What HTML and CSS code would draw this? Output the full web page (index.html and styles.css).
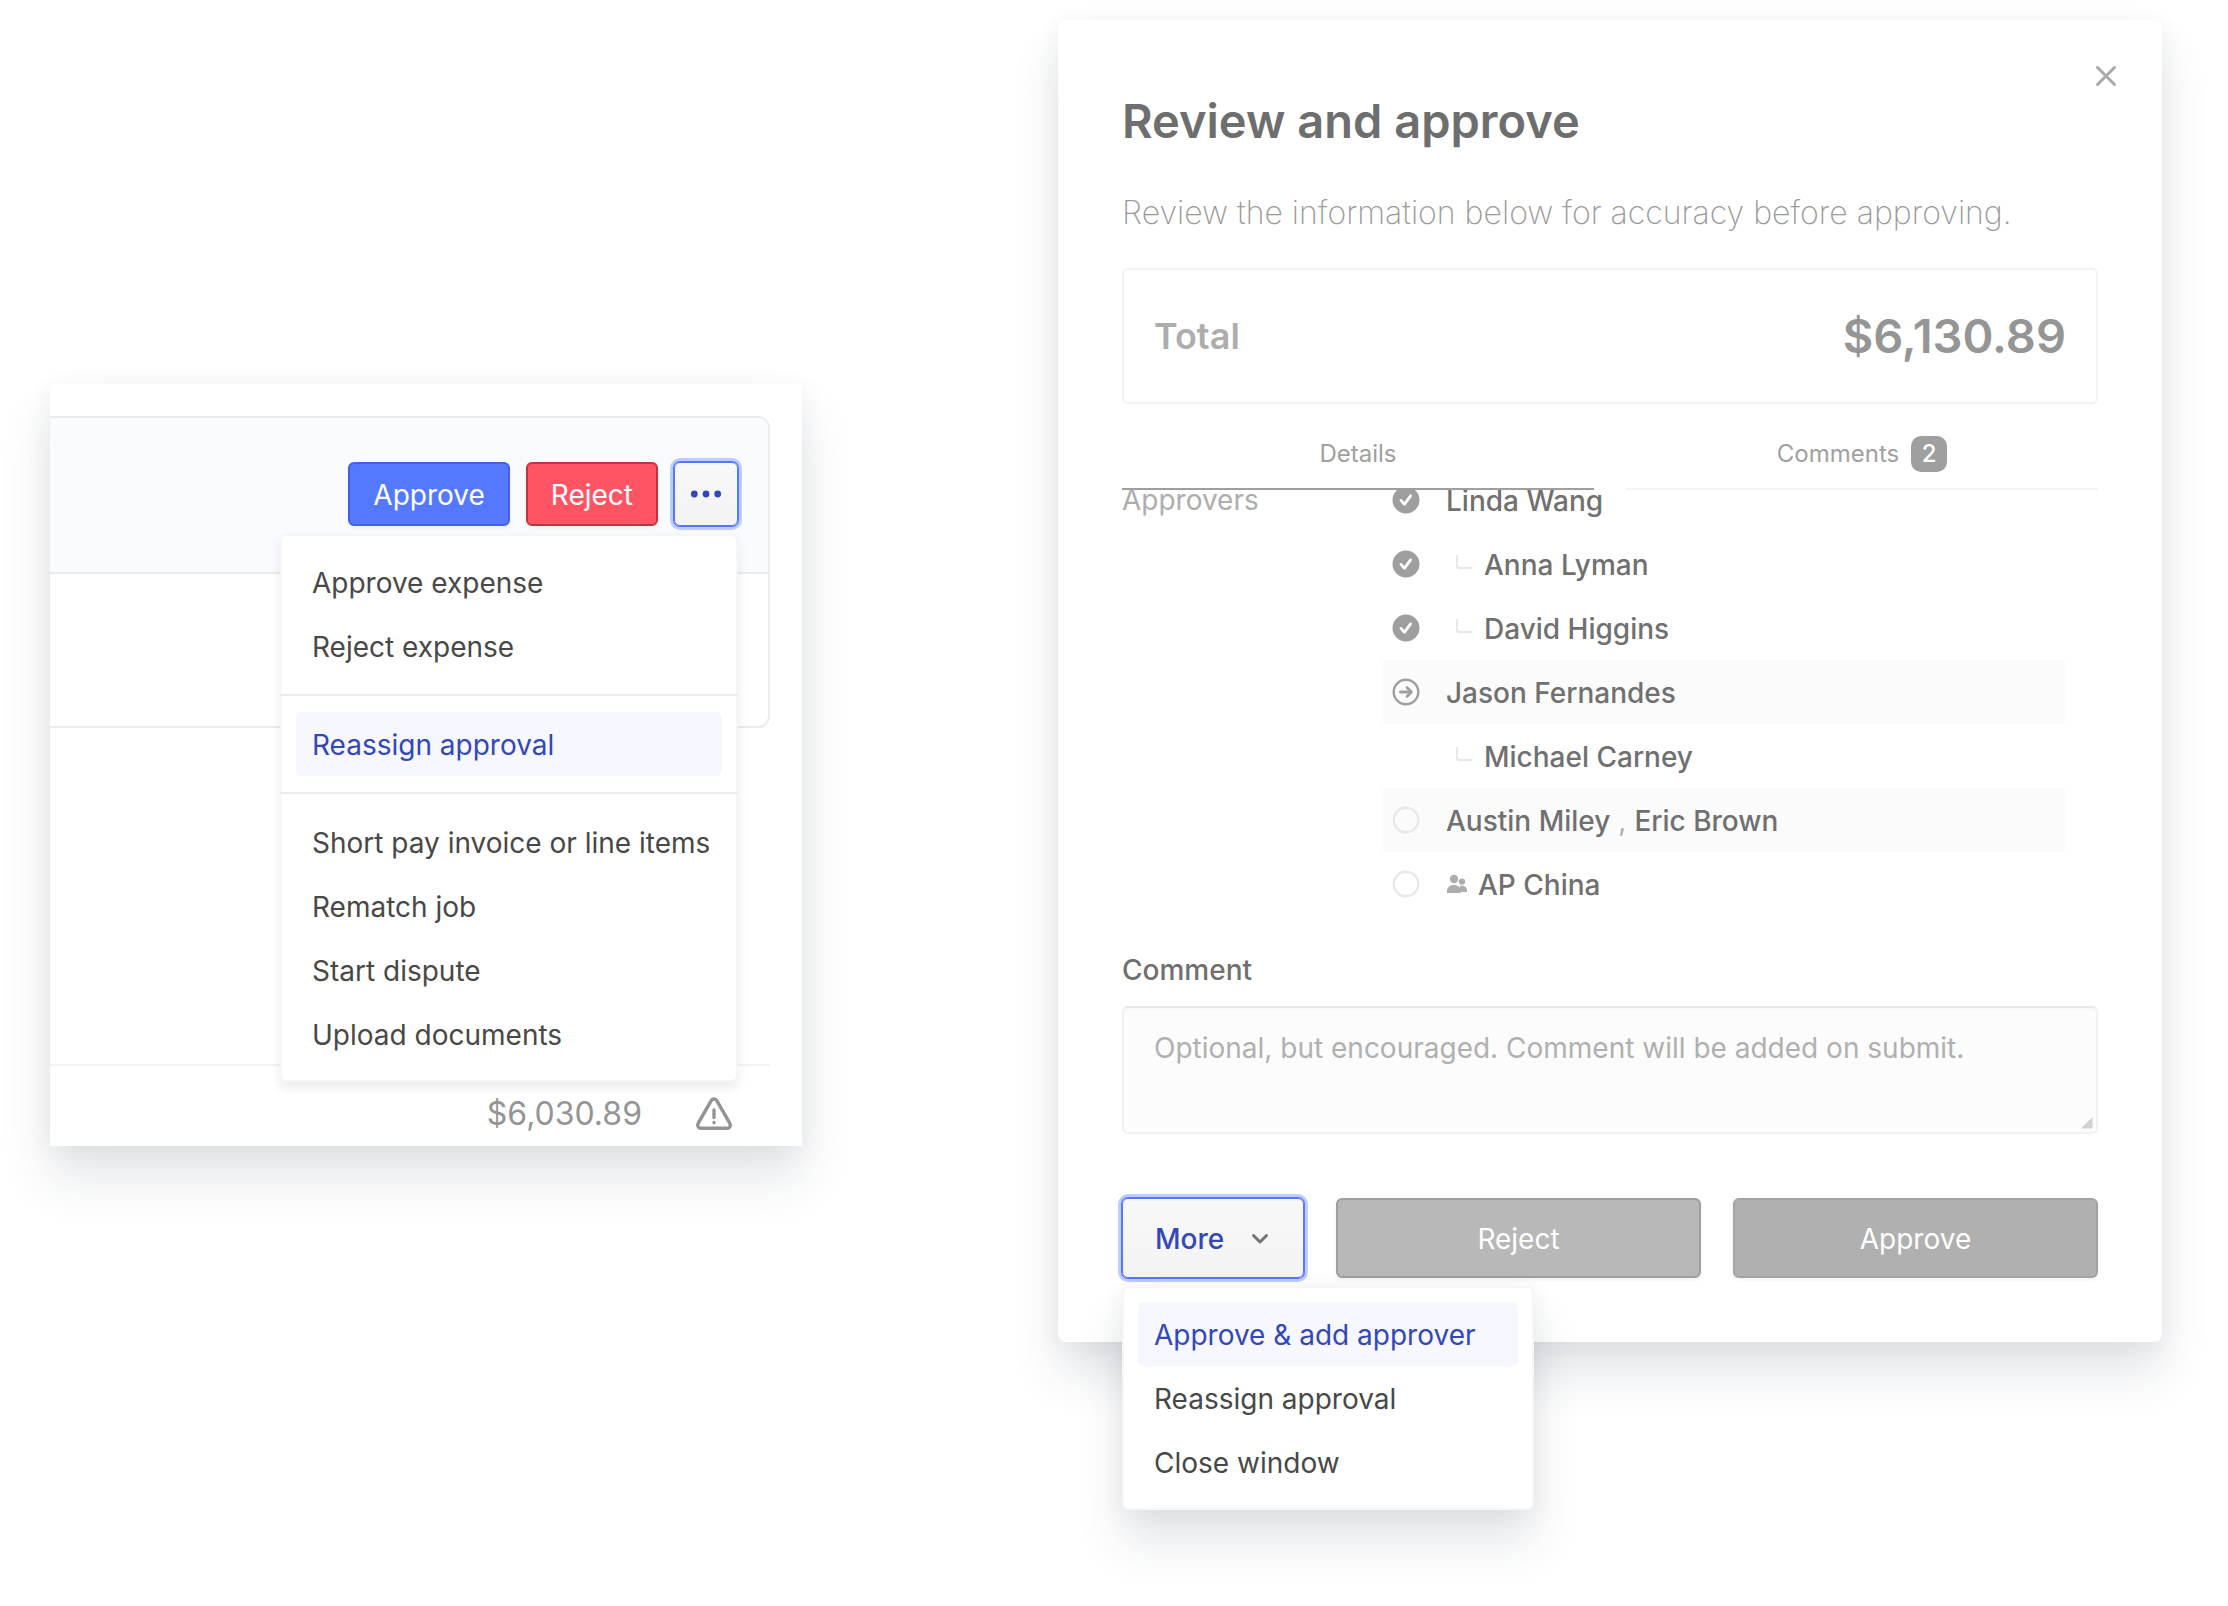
FILE: index.html
```html
<!DOCTYPE html>
<html lang="en">
<head>
  <meta charset="UTF-8">
  <meta name="viewport" content="width=device-width, initial-scale=1.0">
  <title>Review and approve</title>
  <link rel="stylesheet" href="styles.css">
</head>
<body>

<main class="page">

  <section class="invoice">
    <div class="panel">
      <div class="panel-actions">
        <button class="btn btn-approve">Approve</button>
        <button class="btn btn-reject">Reject</button>
        <div class="dropdown">
          <button class="btn btn-dots focused" aria-label="More actions">
            <svg width="32" height="12" viewBox="0 0 32 12" fill="currentColor">
              <circle cx="4.300" cy="6" r="3.400"/><circle cx="16" cy="6" r="3.400"/><circle cx="27.700" cy="6" r="3.400"/>
            </svg>
          </button>
          <div class="menu menu-right">
            <button class="menu-item">Approve expense</button>
            <button class="menu-item">Reject expense</button>
            <hr>
            <button class="menu-item active">Reassign approval</button>
            <hr>
            <button class="menu-item">Short pay invoice or line items</button>
            <button class="menu-item">Rematch job</button>
            <button class="menu-item">Start dispute</button>
            <button class="menu-item">Upload documents</button>
          </div>
        </div>
      </div>
      <div class="panel-row"></div>
    </div>
    <div class="invoice-total">
      <span>$6,030.89</span>
      <svg width="40" height="36" viewBox="0 0 40 36" fill="none" stroke="currentColor" stroke-width="3.4" stroke-linecap="round" stroke-linejoin="round">
        <path d="M17.2 4.6 4.3 27.2C2.9 29.7 4.2 32.3 7 32.3h26c2.8 0 4.1-2.6 2.7-5.1L22.8 4.6c-1.3-2.2-4.3-2.2-5.6 0z"/>
        <path d="M20 14v7.5M20 26.4v.3"/>
      </svg>
    </div>
  </section>

  <section class="modal">
    <button class="close" aria-label="Close">
      <svg width="24" height="24" viewBox="0 0 24 24" fill="none" stroke="currentColor" stroke-width="3" stroke-linecap="round">
        <path d="M3.5 3.5l17 17M20.5 3.5l-17 17"/>
      </svg>
    </button>
    <h1>Review and approve</h1>
    <p class="intro">Review the information below for accuracy before approving.</p>

    <div class="total">
      <span class="total-label">Total</span>
      <span class="total-amount">$6,130.89</span>
    </div>

    <div class="tabs">
      <button class="tab selected">Details</button>
      <button class="tab">Comments <span class="badge">2</span></button>
    </div>

    <!-- list is scrolled to its end, the first row sits partly under the tabs -->
    <div class="details">
      <div class="details-label">Approvers</div>
      <ul class="approvers">
        <li>
          <svg class="status" viewBox="0 0 28 28"><circle cx="14" cy="14" r="13.5" fill="currentColor"/><path d="M9 14.4l3.4 3.9 6.2-8.5" fill="none" stroke="#fff" stroke-width="2.8" stroke-linecap="round" stroke-linejoin="round"/></svg>
          <span class="name">Linda Wang</span>
        </li>
        <li>
          <svg class="status" viewBox="0 0 28 28"><circle cx="14" cy="14" r="13.5" fill="currentColor"/><path d="M9 14.4l3.4 3.9 6.2-8.5" fill="none" stroke="#fff" stroke-width="2.8" stroke-linecap="round" stroke-linejoin="round"/></svg>
          <span class="elbow"></span>
          <span class="name">Anna Lyman</span>
        </li>
        <li>
          <svg class="status" viewBox="0 0 28 28"><circle cx="14" cy="14" r="13.5" fill="currentColor"/><path d="M9 14.4l3.4 3.9 6.2-8.5" fill="none" stroke="#fff" stroke-width="2.8" stroke-linecap="round" stroke-linejoin="round"/></svg>
          <span class="elbow"></span>
          <span class="name">David Higgins</span>
        </li>
        <li class="shaded">
          <svg class="status" viewBox="0 0 28 28" fill="none" stroke="currentColor" stroke-width="2.4" stroke-linecap="round" stroke-linejoin="round"><circle cx="14" cy="14" r="12.3"/><path d="M8.4 14h10.4" stroke-width="2.8"/><path d="M15 9.6l4.4 4.4-4.4 4.4" stroke-width="2.8"/></svg>
          <span class="name">Jason Fernandes</span>
        </li>
        <li>
          <span class="status"></span>
          <span class="elbow"></span>
          <span class="name">Michael Carney</span>
        </li>
        <li class="shaded">
          <svg class="status pending" viewBox="0 0 28 28" fill="none" stroke="currentColor" stroke-width="2.4"><circle cx="14" cy="14" r="12.3"/></svg>
          <span class="name">Austin Miley</span>
          <span class="name comma">,</span>
          <span class="name">Eric Brown</span>
        </li>
        <li>
          <svg class="status pending" viewBox="0 0 28 28" fill="none" stroke="currentColor" stroke-width="2.4"><circle cx="14" cy="14" r="12.3"/></svg>
          <svg class="group" width="22" height="20" viewBox="0 0 22 20" fill="currentColor"><circle cx="8" cy="5" r="4.2"/><circle cx="16" cy="7.6" r="3.2"/><path d="M1 19v-2.200C1 13.500 4 11 8 11s6.800 2.500 6.800 5.800V19z"/><path d="M14 11.900c4-.900 7 1.400 7 4.400V18h-7z"/></svg>
          <span class="name">AP China</span>
        </li>
      </ul>
    </div>

    <label class="comment-label" for="comment">Comment</label>
    <div class="comment-box">
      <textarea id="comment" placeholder="Optional, but encouraged. Comment will be added on submit."></textarea>
      <svg class="grip" width="12" height="12" viewBox="0 0 12 12"><path d="M11 1v10H1z" fill="#d2d2d2" stroke="#d2d2d2" stroke-linejoin="round"/></svg>
    </div>

    <div class="modal-actions">
      <div class="dropdown">
        <button class="btn btn-more focused">
          More
          <svg width="20" height="14" viewBox="0 0 20 14" fill="none" stroke="#73736f" stroke-width="3" stroke-linecap="round" stroke-linejoin="round"><path d="M3.500 3.500l6.500 6.500 6.500-6.500"/></svg>
        </button>
        <div class="menu menu-left">
          <button class="menu-item active">Approve &amp; add approver</button>
          <button class="menu-item">Reassign approval</button>
          <button class="menu-item">Close window</button>
        </div>
      </div>
      <button class="btn btn-muted">Reject</button>
      <button class="btn btn-muted dark">Approve</button>
    </div>
  </section>

</main>

</body>
</html>
```
FILE: styles.css
```css
* {
  box-sizing: border-box;
}
body {
  margin: 0;
  font-family: Inter, "Liberation Sans", sans-serif;
  font-size: 28px;
  line-height: 40px;
  background: #fff;
  color: #484848;
}
button, textarea {
  font: inherit;
}
button {
  cursor: pointer;
}
.page {
  display: grid;
  grid-template-columns: 752fr 1104fr;
  gap: 256px;
  align-items: start;
  padding: 20px 66px 264px 50px;
}
.invoice, .modal {
  background: #fff;
  box-shadow: 0 32px 48px rgba(36, 52, 72, 0.12), 0 4px 24px rgba(36, 52, 72, 0.06);
}

/* invoice card */
.invoice {
  margin-top: 364px;
  padding-top: 32px;
}
.panel {
  margin-right: 32px;
  border: 2px solid #ebebeb;
  border-left: none;
  border-radius: 0 12px 12px 0;
}
.panel-actions {
  display: flex;
  justify-content: flex-end;
  gap: 16px;
  padding: 44px 30px 46px;
  background: #fafbff;
  border-bottom: 2px solid #ebebeb;
  border-radius: 0 10px 0 0;
}
.panel-row {
  height: 152px;
}
.invoice-total {
  display: flex;
  justify-content: flex-end;
  align-items: center;
  gap: 52px;
  margin: 336px 32px 0 0;
  padding: 16px 36px 0 0;
  border-top: 2px solid #f3f3f3;
  font-size: 32px;
  line-height: 64px;
  color: #949494;
}

/* buttons */
.btn {
  height: 64px;
  padding: 2px 23px 0;
  border: 2px solid;
  border-radius: 6px;
  color: #fff;
  box-shadow: 0 2px 4px rgba(0, 0, 0, 0.06);
}
.btn-approve {
  background: #5478ff;
  border-color: #4560e6;
}
.btn-reject {
  background: #ff5464;
  border-color: #c43240;
}
.btn-dots {
  display: flex;
  align-items: center;
  justify-content: center;
  width: 64px;
  padding: 0;
}
.focused {
  border: 1px solid #5478ff;
  background: linear-gradient(#f8f8f8, #f3f3f3);
  color: #3347b8;
  box-shadow: 0 0 0 1px #5478ff, 0 0 0 4px #bfccff;
}

/* menus */
.dropdown {
  position: relative;
}
.menu {
  position: absolute;
  top: calc(100% + 8px);
  z-index: 1;
  padding: 14px 0;
  background: #fff;
  border: 2px solid #f6f6f6;
  border-radius: 6px;
}
.menu-right {
  right: 0;
  width: 458px;
  box-shadow: 0 6px 12px rgba(0, 0, 0, 0.08);
}
.menu-left {
  left: 0;
  width: 412px;
  box-shadow: 0 32px 48px rgba(36, 52, 72, 0.12), 0 4px 24px rgba(36, 52, 72, 0.06);
}
.menu hr {
  margin: 16px -2px;
  border: none;
  border-top: 2px solid #ebebeb;
}
.menu-item {
  display: block;
  width: calc(100% - 28px);
  height: 64px;
  margin: 0 14px;
  padding: 2px 16px 0;
  border: none;
  border-radius: 6px;
  background: none;
  color: #484848;
  text-align: left;
  white-space: nowrap;
}
.menu-item.active {
  background: #f6f7ff;
  color: #3347b8;
}

/* review modal */
.modal {
  position: relative;
  padding: 72px 64px 64px;
  border-radius: 8px;
}
.close {
  position: absolute;
  top: 36px;
  right: 36px;
  display: flex;
  align-items: center;
  justify-content: center;
  width: 40px;
  height: 40px;
  padding: 0;
  border: none;
  background: none;
  color: #a9a9a9;
}
h1 {
  margin: 0 0 42px;
  font-size: 47px;
  line-height: 58px;
  font-weight: 600;
  color: #6e6e6e;
}
.intro {
  margin: 0 0 34px;
  font-size: 32px;
  line-height: 42px;
  font-weight: 200;
  color: #9a9a9a;
}
.total {
  display: flex;
  justify-content: space-between;
  align-items: center;
  height: 136px;
  padding: 0 30px;
  border: 2px solid #f3f3f3;
  border-radius: 6px;
  font-weight: 600;
}
.total-label {
  font-size: 36px;
  color: #adadad;
}
.total-amount {
  font-size: 47px;
  color: #959595;
}
.tabs {
  display: grid;
  grid-template-columns: 1fr 1fr;
  gap: 32px;
  margin-top: 16px;
}
.tab {
  display: flex;
  justify-content: center;
  align-items: center;
  gap: 12px;
  padding: 16px 0;
  border: none;
  border-bottom: 2px solid #f3f3f3;
  background: none;
  font-size: 24px;
  line-height: 36px;
  color: #a0a0a0;
}
.tab.selected {
  border-color: #9f9f9f;
}
.badge {
  width: 36px;
  border-radius: 10px;
  background: #9f9f9f;
  color: #fff;
  font-weight: 500;
}
.details {
  display: flex;
  align-items: flex-end;
  height: 426px;
  overflow: hidden;
  line-height: 64px;
}
.details-label {
  width: 260px;
  height: 448px;
  color: #adadad;
}
.approvers {
  flex: 1;
  margin: 0 32px 0 0;
  padding: 0;
  list-style: none;
  font-weight: 500;
  color: #707070;
}
.approvers li {
  display: flex;
  align-items: center;
  height: 64px;
  padding-left: 10px;
  border-radius: 4px;
}
.approvers .shaded {
  background: #fbfbfb;
}
.name {
  padding-top: 2px;
}
.comma {
  margin: 0 8px;
  font-weight: 400;
  color: #adadad;
}
.status {
  width: 28px;
  height: 28px;
  margin-right: 26px;
  color: #9f9f9f;
}
.pending {
  color: #e8e8e8;
}
.group {
  margin-right: 10px;
  color: #adadad;
}
.elbow {
  width: 16px;
  height: 14px;
  margin: 0 12px 4px 10px;
  border: solid #e8e8e8;
  border-width: 0 0 2px 2px;
  border-radius: 0 0 0 3px;
}
.comment-label {
  display: block;
  margin: 34px 0 16px;
  font-weight: 500;
  color: #707070;
}
.comment-box {
  position: relative;
}
textarea {
  display: block;
  width: 100%;
  height: 128px;
  padding: 20px 30px;
  border: 2px solid #f1f1f1;
  border-top-color: #e9e9e9;
  border-radius: 6px;
  background: #fcfcfc;
  box-shadow: inset 0 2px 2px rgba(0, 0, 0, 0.02);
  color: #707070;
  resize: none;
}
textarea::placeholder {
  color: #b0b0b0;
}
.grip {
  position: absolute;
  right: 5px;
  bottom: 5px;
}
.modal-actions {
  display: flex;
  gap: 32px;
  margin-top: 64px;
}
.modal-actions > .btn, .btn-more {
  height: 80px;
}
.btn-more {
  display: flex;
  align-items: center;
  justify-content: space-between;
  width: 182px;
  padding: 2px 33px 0 32px;
  font-weight: 500;
}
.btn-muted {
  flex: 1;
  background: #b8b8b8;
  border-color: #9f9f9f;
}
.btn-muted.dark {
  background: #b0b0b0;
  border-color: #a3a3a3;
}
```
